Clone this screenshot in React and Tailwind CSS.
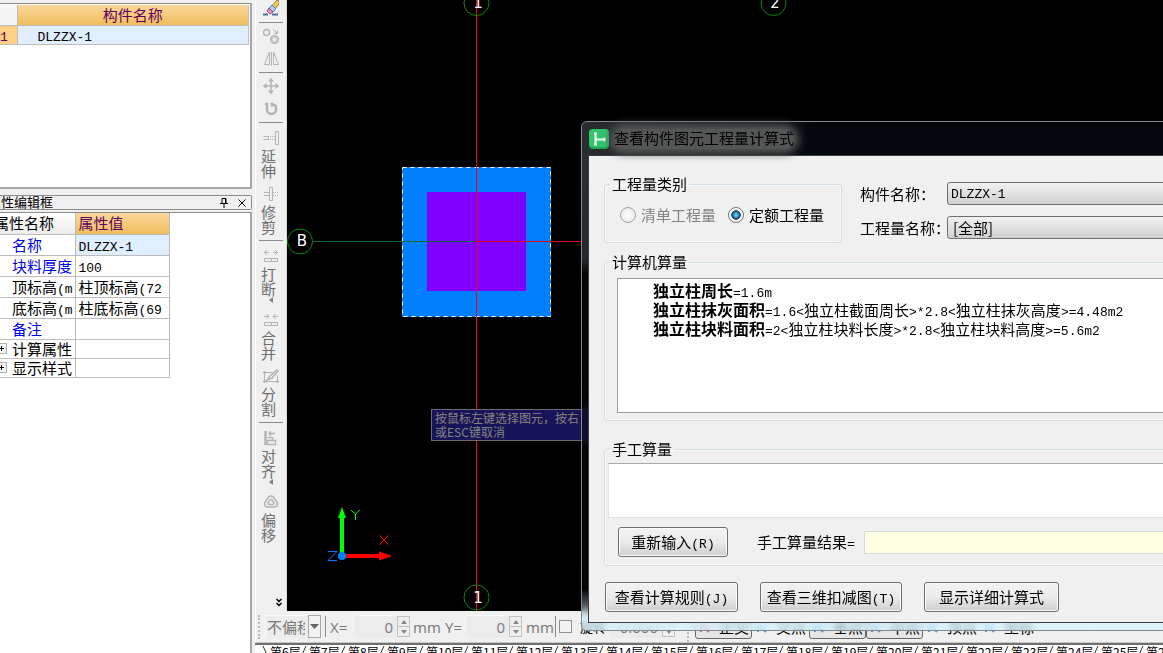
import React, { useState } from 'react'

const FLOORS = Array.from({ length: 21 }, (_, i) => `第${i + 6}层`)

// CJK runs stay in the sans face, everything else is set in narrow mono
function T({ children }) {
  return children.split(/([\x20-\x7e]+)/).filter(Boolean).map((part, i) =>
    /^[\x20-\x7e]/.test(part)
      ? <span key={i} className="font-['Liberation_Mono',monospace] text-[13px] leading-[0]">{part}</span>
      : <React.Fragment key={i}>{part}</React.Fragment>
  )
}

function Icon({ children }) {
  return (
    <svg viewBox="0 0 16 16" className="w-4 h-4 ml-1 shrink-0 text-[#b4b4b4]" fill="none" stroke="currentColor">
      {children}
    </svg>
  )
}

const ICONS = {
  brush: (
    <>
      <path d="M0 14.500h5M9 14.500h6" stroke="#47709f" strokeWidth="2" />
      <path d="M9 6l5-6 2 1v3l-4 5z" fill="#f5c84a" stroke="#a08048" />
      <path d="M6 8l3-3 4 4-3 3z" fill="#a9cdf0" stroke="#5b7fae" />
      <path d="M4 11l2-3 4 4-3 2z" fill="#ee8fc4" stroke="#9c4a80" />
    </>
  ),
  copy: (
    <>
      <circle cx="3.500" cy="4.500" r="3" strokeWidth="1.500" />
      <circle cx="11.500" cy="11.500" r="3.800" strokeWidth="1.500" />
      <path d="M9.500 13a2.500 2.500 0 0 1 4-3M13.500 10a2.500 2.500 0 0 1-4 3" />
      <path d="M10 1.500l4 3.500M14.500 2v3.500H11" />
    </>
  ),
  mirror: <path d="M6.500 1v12.500h-5zM10.500 1v12.500h5zM8.500 1v14" />,
  move: <path d="M8 1v14M1 8h14M6 3.500L8 1l2 2.500M6 12.500L8 15l2-2.500M3.500 6L1 8l2.500 2M12.500 6L15 8l-2.500 2" strokeWidth="1.500" />,
  rotate: <path d="M4 2v6.500a4.500 4.500 0 0 0 9 0V6.500c0-2-1-3-4-3M2 3h3M9 1.500v4" strokeWidth="2.400" />,
  extend: (
    <>
      <path d="M.5 6.500h5v3h-5M12.500 1.500h3v13h-3z" />
      <path d="M7 6.500h5M7 9.500h5" strokeDasharray="1 1" />
    </>
  ),
  trim: (
    <>
      <path d="M6.500 1.500h3v13h-3zM1 6.500h5M1 9.500h5" />
      <path d="M10 6.500h6M10 9.500h6" strokeDasharray="1 1" />
    </>
  ),
  split: <path d="M1 4.500h5M4 2L1.500 4.500 4 7M10 4.500h5M12 2l2.500 2.500L12 7M1.500 10.500h13v3h-13zM8.500 10.500v3" />,
  merge: <path d="M1 4.500h5M3.500 2L6 4.500 3.500 7M10 4.500h5M12.500 2L10 4.500 12.500 7M1.500 10.500h13v3h-13zM8.500 10.500v3" />,
  divide: (
    <>
      <path d="M1.500 4.500h8M1.500 4.500v9h13v-6" />
      <path d="M0 4.500h3M0 13.500h3M13 13.500h3M1.500 3v3M1.500 12v3M14.500 12v3" strokeWidth="1.500" />
      <path d="M4 12l3-4 7-6 1 1-6 7z" strokeWidth="1.500" />
    </>
  ),
  align: (
    <>
      <path d="M2.500 1v14" strokeWidth="2.500" />
      <path d="M6 3.500h6M8 1.500l-2 2 2 2M4.500 7.500h5v3h-5M4.500 10.500h8v4h-8z" strokeWidth="1.300" />
    </>
  ),
  offset: (
    <>
      <path d="M5.500 3Q8 1 10.500 3l4 6q.5 3-2.500 4H4q-3-1-2.500-4z" strokeWidth="1.500" />
      <path d="M8 5.500q1 0 1.500 1l1.500 2.500q0 1.500-1 1.500H6q-1 0-1-1.500l1.500-2.500q.5-1 1.500-1z" strokeWidth="1.500" />
    </>
  ),
}

function Tool({ icon, label, menu, title }) {
  return (
    <button title={title || label} className="w-full flex flex-col items-start">
      <Icon>{ICONS[icon]}</Icon>
      {label && (
        <span className="w-[15px] ml-0.5 mt-0.5 mb-px text-[15px] leading-[15px] text-[#6f6f6f] break-all">{label}</span>
      )}
      {menu && (
        <svg viewBox="0 0 4 6" className="w-1 h-1.5 ml-2.5 -mb-1.5" fill="#808080"><path d="M4 0v6L0 3z" /></svg>
      )}
    </button>
  )
}

function ToolGroup({ children, className }) {
  return <div className={`mx-[3px] flex flex-col border-b border-[#8a8a8a] ${className}`}>{children}</div>
}

function ToolBar() {
  return (
    <nav className="w-8 shrink-0 bg-[#f0f0f0] border-l border-white border-r border-r-[#dcdcdc] flex flex-col text-left">
      <ToolGroup className="pb-1.5">
        <Tool icon="brush" title="格式刷" />
      </ToolGroup>
      <ToolGroup className="pt-[5px] pb-[5px] gap-[7px]">
        <Tool icon="copy" title="复制" />
        <Tool icon="mirror" title="镜像" />
      </ToolGroup>
      <ToolGroup className="pt-[5px] pb-[5px] gap-[7px]">
        <Tool icon="move" title="移动" />
        <Tool icon="rotate" title="旋转" />
      </ToolGroup>
      <ToolGroup className="pt-[7px] pb-[5px] gap-[7px]">
        <Tool icon="extend" label="延伸" />
        <Tool icon="trim" label="修剪" />
      </ToolGroup>
      <ToolGroup className="pt-[7px] pb-[5px] gap-[7px]">
        <Tool icon="split" label="打断" menu />
        <div className="mt-2"><Tool icon="merge" label="合并" /></div>
        <Tool icon="divide" label="分割" />
      </ToolGroup>
      <div className="mx-[3px] pt-[7px] flex flex-col gap-[15px]">
        <Tool icon="align" label="对齐" menu />
        <Tool icon="offset" label="偏移" />
      </div>
      <button title="更多" className="mt-auto ml-auto mr-1 mb-1">
        <svg viewBox="0 0 6 9" className="w-1.5 h-[9px]" fill="none" stroke="#000" strokeWidth="1.500">
          <path d="M.5 1L3 3.500 5.500 1M.5 5L3 7.500 5.500 5" />
        </svg>
      </button>
    </nav>
  )
}

const PROPS = [
  { name: '名称', value: 'DLZZX-1', blue: true, active: true },
  { name: '块料厚度', value: '100', blue: true },
  { name: '顶标高(m', value: '柱顶标高(72' },
  { name: '底标高(m', value: '柱底标高(69' },
  { name: '备注', value: '', blue: true },
  { name: '计算属性', value: '', group: true },
  { name: '显示样式', value: '', group: true },
]

function SidePanels() {
  return (
    <aside className="w-[252px] shrink-0 flex flex-col bg-[#f0f0f0]">
      <section className="h-[189px] shrink-0 pt-[3px]">
        <div className="h-full bg-white border-t border-t-[#8c8c8c] border-r-2 border-b-2 border-[#a6a6aa] pt-px pr-px">
          <table className="w-full table-fixed border-collapse">
            <thead>
              <tr className="h-[20px] text-[15px] leading-[18px]">
                <th className="w-[17px] p-0 border-r border-b border-[#bcbcbc] bg-[#f4f4f4]"></th>
                <th className="p-0 border-r border-b border-[#bcbcbc] font-normal text-[#5c0060] bg-linear-to-b from-[#fad79a] to-[#f0bd5c]">构件名称</th>
              </tr>
            </thead>
            <tbody>
              <tr className="h-[19px] text-[15px] leading-[18px]">
                <td className="p-0 border-r border-b border-[#bcbcbc] bg-[#ffd083] text-[#5c0060]"><T>1</T></td>
                <td className="p-0 pl-5 border-r border-b border-[#bcbcbc] bg-[#e0efff]"><T>DLZZX-1</T></td>
              </tr>
            </tbody>
          </table>
        </div>
      </section>

      <header className="mt-1.5 h-[15px] shrink-0 border border-l-0 border-[#8c8c8c] rounded-r-xs flex items-center text-[13px] leading-[13px] whitespace-nowrap">
        <h2 className="-ml-3 pb-0.5">属性编辑框</h2>
        <button title="固定" className="ml-auto mr-2.5">
          <svg viewBox="0 0 8 10" className="w-2 h-2.5" fill="none" stroke="#000">
            <path d="M2 .5h4v5H2zM0 5.500h8M4 6v4M5.500 1v4" />
          </svg>
        </button>
        <button title="关闭" className="mr-[5px]">
          <svg viewBox="0 0 8 8" className="w-2 h-2" fill="none" stroke="#000"><path d="M.5.5l7 7M7.500.5l-7 7" /></svg>
        </button>
      </header>

      <section className="mt-0.5 flex-1 bg-white border-t border-t-[#8c8c8c] border-r-2 border-[#a6a6aa]">
        <table className="w-[170px] table-fixed border-collapse text-[15px] leading-[18px] whitespace-nowrap">
          <thead>
            <tr className="h-[21px] text-left">
              <th className="w-[75px] p-0 border-r border-b border-[#bcbcbc] font-normal bg-linear-to-b from-white to-[#ececec]">
                <span className="-ml-1.5">属性名称</span>
              </th>
              <th className="p-0 pl-[3px] border-r border-b border-[#bcbcbc] font-normal text-[#5c0060] bg-linear-to-b from-[#fad79a] to-[#f0bd5c]">属性值</th>
            </tr>
          </thead>
          <tbody>
            {PROPS.map(p => (
              <tr key={p.name} className={p.group ? 'h-[19px]' : 'h-[21px]'}>
                <td className="p-0 border-r border-b border-[#bcbcbc]">
                  <div className={`flex overflow-hidden items-center ${p.blue ? 'text-[#0000e6]' : 'text-black'}`}>
                    <span className="w-3 shrink-0">
                      {p.group && (
                        <button title="展开" className="block w-[7px] h-[11px] border border-l-0 border-[#b0b0b0] bg-[#f4f4f4]">
                          <svg viewBox="0 0 6 9" className="w-1.5 h-[9px]" stroke="#000"><path d="M0 4.500h4M1.500 2v5" /></svg>
                        </button>
                      )}
                    </span>
                    <span><T>{p.name}</T></span>
                  </div>
                </td>
                <td className={`p-0 pl-[3px] border-r border-b border-[#bcbcbc] ${p.active ? 'bg-[#e0efff]' : ''}`}>
                  <T>{p.value}</T>
                </td>
              </tr>
            ))}
          </tbody>
        </table>
      </section>
    </aside>
  )
}

function Canvas() {
  return (
    <main className="relative flex-1 bg-black overflow-hidden">
      <svg className="block w-full h-full" fill="none">
        <rect x="115" y="167" width="149" height="150" fill="#0080ff" />
        <rect x="140" y="192" width="99" height="99" fill="#8000ff" />
        <rect x="115.500" y="167.500" width="148" height="149" stroke="#fff" strokeDasharray="4 4" />
        <path d="M26 241.500h163" stroke="#0a6a28" />
        <path d="M190 241.500h400" stroke="#e00010" />
        <path d="M189.500 0v611" stroke="#ff0000" />
        <g stroke="#0a8a0a">
          <circle cx="189.500" cy="3" r="12.500" />
          <circle cx="486.500" cy="3" r="12.500" />
          <circle cx="13" cy="241.500" r="12.500" />
          <circle cx="189.500" cy="597.500" r="12.500" />
        </g>
        <g fill="#fff" fontFamily="DejaVu Sans" fontSize="15" textAnchor="middle">
          <text x="191" y="8">1</text>
          <text x="488" y="8">2</text>
          <text x="15" y="246">B</text>
          <text x="191" y="603">1</text>
        </g>
        {/* UCS axes */}
        <path d="M55 554V518" stroke="#00ff00" strokeWidth="4" />
        <path d="M55 507l4 11h-8z" fill="#00ff00" />
        <path d="M56 556h36" stroke="#ff0000" strokeWidth="4" />
        <path d="M92 551.500l13 4.500-13 4.500z" fill="#ff0000" />
        <circle cx="55" cy="556" r="4" fill="#0080ff" />
        <path d="M64 510l4.500 4 4.500-4M68.500 514v6" stroke="#00ff00" />
        <path d="M92 535l10 10M102 535l-10 10" stroke="#ff0000" />
        <path d="M41 551.500h9l-9 9h9" stroke="#0080ff" />
      </svg>
      <div className="absolute left-36 top-[409px] w-[190px] h-8 px-[3px] pt-px border border-[#6c6c6c] bg-[#17145a] text-[12px] leading-[14px] text-[#85857a]">
        <p>按鼠标左键选择图元，按右</p>
        <p>或ESC键取消</p>
      </div>
    </main>
  )
}

function Spin({ label, value, disabled, wide }) {
  return (
    <span className="flex items-center">
      <input
        aria-label={label}
        defaultValue={value}
        readOnly={disabled}
        className={`h-[23px] bg-[#ececec] border-t border-[#f8f8f8] pr-1 text-right text-[#7a7a7a] ${wide ? 'w-[52px]' : 'w-[42px]'}`}
      />
      <span className="w-[13px] h-[21px] flex flex-col border border-[#c0c0c0]">
        <button title="增加" className="flex-1 flex items-center justify-center border-b border-[#c0c0c0]">
          <svg viewBox="0 0 6 4" className="w-1.5 h-1" fill="#888"><path d="M3 0l3 4H0z" /></svg>
        </button>
        <button title="减少" className="flex-1 flex items-center justify-center">
          <svg viewBox="0 0 6 4" className="w-1.5 h-1" fill="#888"><path d="M0 0h6L3 4z" /></svg>
        </button>
      </span>
    </span>
  )
}

const SNAPS = [
  { label: '正交', on: true, color: '#d46a6a' },
  { label: '交点', color: '#5b8fd6' },
  { label: '垂点', on: true, color: '#5b8fd6' },
  { label: '中点', on: true, color: '#5b8fd6' },
  { label: '顶点', color: '#5b8fd6' },
  { label: '坐标', color: '#5b8fd6' },
]

function StatusBar() {
  return (
    <div className="h-8 shrink-0 flex items-center bg-[#f0f0f0] border-l border-b border-b-[#c8c8c8] border-white font-['Open_Sans','Noto_Sans_CJK_SC',sans-serif] text-[15px] leading-5 text-[#777] whitespace-nowrap overflow-hidden">
      <span className="w-0.5 h-6 ml-0.5 border-l-2 border-dotted border-[#b8b8b8]" />
      <div className="relative ml-[5px] w-14 h-[23px]">
        <select aria-label="偏移方式" className="appearance-none w-full h-full pl-px pr-4 bg-[#ededed] border-t border-l border-[#fafafa] overflow-hidden text-clip">
          <option>不偏移</option>
        </select>
        <span className="absolute right-0 top-0 w-[13px] h-[23px] border border-[#a8a8a8] bg-[#f2f2f2] flex items-center justify-center pointer-events-none">
          <svg viewBox="0 0 9 5" className="w-[9px] h-[5px]" fill="#666"><path d="M0 0h9L4.500 5z" /></svg>
        </span>
      </div>
      <span className="w-px h-[21px] mx-1 bg-[#8a8a8a]" />
      <span className="w-[25px]">X=</span>
      <Spin label="X" value="0" disabled />
      <span className="w-8 ml-[3px]">mm</span>
      <span className="w-[22px]">Y=</span>
      <Spin label="Y" value="0" disabled />
      <span className="ml-1 w-[29px]">mm</span>
      <span className="w-px h-[21px] mr-[3px] bg-[#8a8a8a]" />
      <input type="checkbox" id="rotate" className="appearance-none w-[13px] h-[13px] border border-[#909090] bg-[#f2f2f2]" />
      <label htmlFor="rotate" className="ml-2 w-[30px] text-[13px] text-black">旋转</label>
      <Spin label="旋转角度" value="0.000" wide />
      <div className="ml-3 pl-1.5 pr-1 h-[30px] flex items-center border-l-2 border-dotted border-[#b8b8b8] text-[15px] text-black">
        {SNAPS.map(s => (
          <button key={s.label} className={`h-[25px] w-[57px] flex items-center justify-end gap-2 pr-0.5 rounded-[3px] border ${s.on ? 'border-[#666] bg-[#e6e6e6]' : 'border-transparent'}`}>
            <svg viewBox="0 0 12 12" className="w-3 h-3" fill="none" stroke={s.color} strokeWidth="2"><path d="M2 1v10M10 11L5 6l5-5" /></svg>
            {s.label}
          </button>
        ))}
      </div>
    </div>
  )
}

function FloorTabs() {
  return (
    <div className="h-2.5 shrink-0 flex items-start pl-1.5 bg-white border-t-2 border-[#6e6e6e] overflow-hidden whitespace-nowrap font-['Noto_Sans_CJK_SC',sans-serif] text-[12px] leading-[13px]">
      {FLOORS.map((f, i) => (
        <button key={f} className="flex shrink-0">
          <svg viewBox="0 0 9 12" className="w-[9px] h-3" fill="none" stroke="#333">
            <path d={i === 0 ? 'M2 1l5 11' : 'M6 1L1 12'} />
          </svg>
          <span className={f.length > 3 ? 'w-9' : 'w-[30px]'}>{f}</span>
        </button>
      ))}
    </div>
  )
}

function Group({ title, className, children }) {
  return (
    <fieldset className={`border border-[#d2dde4] rounded-[3px] shadow-[inset_0_0_0_1px_#f8fafb] ${className}`}>
      <legend className="ml-[5px] px-0.5 text-[15px] leading-4">{title}</legend>
      {children}
    </fieldset>
  )
}

function Radio({ id, label, checked, onChange, muted }) {
  return (
    <span className="flex items-center gap-[5px]">
      <input
        type="radio"
        name="kind"
        id={id}
        checked={checked}
        onChange={onChange}
        className="appearance-none w-4 h-4 rounded-full border border-[#a4a4a4] bg-radial from-white to-[#e2e2e2] checked:border-[#777] checked:from-[#5cc4ee] checked:from-10% checked:via-[#12406e] checked:via-45% checked:to-[#f4f4f4] checked:to-50%"
      />
      <label htmlFor={id} className={muted ? 'text-[#848484]' : ''}>{label}</label>
    </span>
  )
}

function Button({ children, className }) {
  return (
    <button className={`border border-[#707070] rounded-[3px] bg-linear-to-b from-[#f3f3f3] from-0% via-[#ebebeb] via-50% to-[#cfcfcf] shadow-[inset_0_0_0_1px_#fafafa] text-[15px] leading-[18px] ${className}`}>
      <T>{children}</T>
    </button>
  )
}

const RESULTS = [
  ['独立柱周长', '=1.6m'],
  ['独立柱抹灰面积', '=1.6<独立柱截面周长>*2.8<独立柱抹灰高度>=4.48m2'],
  ['独立柱块料面积', '=2<独立柱块料长度>*2.8<独立柱块料高度>=5.6m2'],
]

function FormulaDialog() {
  const [kind, setKind] = useState('quota')
  const combo = 'appearance-none h-[23px] flex-1 border border-[#707070] rounded-[3px] bg-linear-to-b from-[#f2f2f2] to-[#d0d0d0]'

  return (
    <div
      role="dialog"
      aria-label="查看构件图元工程量计算式"
      className="absolute left-[581px] -right-8 top-[121px] px-1.5 pb-[7px] rounded-t-[6px] rounded-b-[5px] border border-[#85898c] backdrop-blur-[3px] bg-[linear-gradient(#2d3134_0%,#25292c_27%,#05080b99_30%,#05080b66_92%,#d4f4ffb3_98%,#d4f4ffb3_100%)]"
    >
      <header className="h-[33px] -mx-1.5 pl-[7px] flex items-center rounded-t-[6px] bg-linear-to-r from-[#2a2d30] to-[#03070b] to-40%">
        <svg viewBox="0 0 20 20" className="w-5 h-5" fill="none">
          <rect width="20" height="20" rx="4" fill="#1fa653" />
          <rect width="20" height="18" rx="4" fill="#2ec76a" />
          <path d="M6.500 4v12M5 4.500h3M5 15.500h3M7 10.500h9M15.500 8.500v4" stroke="#fff" strokeWidth="2" />
        </svg>
        <h1 className="ml-[5px] pb-0.5 text-[15px] leading-[18px] text-black rounded-full bg-[#545656] shadow-[0_0_8px_5px_#545656]">查看构件图元工程量计算式</h1>
      </header>

      <div className="border border-[#3c4044] bg-[#f0f0f0] pl-[15px] pt-5 pb-2.5 text-[15px] leading-[18px] font-['Noto_Sans_CJK_SC',sans-serif]">
        <div className="flex">
          <Group title="工程量类别" className="w-[238px] h-[67px] shrink-0">
            <div className="flex gap-3 pl-[15px] pt-3.5">
              <Radio id="bill" label="清单工程量" muted checked={kind === 'bill'} onChange={() => setKind('bill')} />
              <Radio id="quota" label="定额工程量" checked={kind === 'quota'} onChange={() => setKind('quota')} />
            </div>
          </Group>
          <div className="flex-1 pl-[18px] pt-1.5 flex flex-col gap-[11px]">
            <div className="flex items-center">
              <label htmlFor="part" className="w-[87px]">构件名称：</label>
              <select id="part" className={`${combo} pl-[3px] pt-0.5 font-['Liberation_Mono',monospace] text-[13px]`}>
                <option>DLZZX-1</option>
              </select>
            </div>
            <div className="flex items-center">
              <label htmlFor="qty" className="w-[87px] whitespace-nowrap">工程量名称：</label>
              <select id="qty" className={`${combo} pl-[5px] font-['Noto_Sans_CJK_SC',sans-serif]`}>
                <option>[全部]</option>
              </select>
            </div>
          </div>
        </div>

        <Group title="计算机算量" className="mt-[11px] h-[167px]">
          <div className="ml-3 mt-2 h-[135px] pl-[35px] pt-0.5 border border-[#9a9ca0] bg-white leading-[19px] whitespace-nowrap">
            {RESULTS.map(([name, formula]) => (
              <p key={name}><b className="text-[16px] leading-[0]">{name}</b><T>{formula}</T></p>
            ))}
          </div>
        </Group>

        <Group title="手工算量" className="mt-5 h-[125px]">
          <textarea aria-label="手工算量" className="block w-full ml-[3px] mt-1.5 h-[55px] resize-none border border-[#e0e2ea] border-t-[#a8a8b0] bg-white" />
          <div className="flex items-center mt-[9px] ml-[13px]">
            <Button className="w-[110px] h-[30px]">重新输入(R)</Button>
            <label htmlFor="result" className="w-[107px] ml-[29px]"><T>手工算量结果=</T></label>
            <input id="result" readOnly className="flex-1 h-[23px] border border-[#d8dae0] bg-[#ffffe1]" />
          </div>
        </Group>

        <div className="flex gap-[22px] mt-4 pl-px">
          <Button className="w-[133px] h-[30px]">查看计算规则(J)</Button>
          <Button className="w-[142px] h-[30px]">查看三维扣减图(T)</Button>
          <Button className="w-[135px] h-[30px]">显示详细计算式</Button>
        </div>
      </div>
    </div>
  )
}

export default function App() {
  return (
    <div className="relative h-screen w-full flex overflow-hidden bg-[#f0f0f0] text-black font-['Noto_Sans_CJK_SC',sans-serif]">
      <SidePanels />
      <div className="flex-1 min-w-0 ml-[3px] flex flex-col">
        <div className="flex-1 min-h-0 flex">
          <ToolBar />
          <Canvas />
        </div>
        <StatusBar />
        <FloorTabs />
      </div>
      <FormulaDialog />
    </div>
  )
}
